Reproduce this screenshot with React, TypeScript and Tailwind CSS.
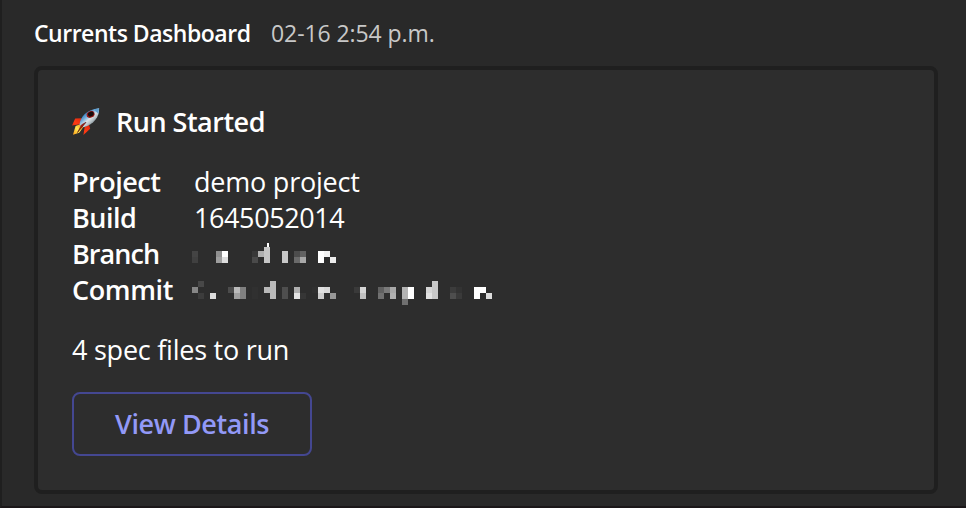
type Block = [x: number, y: number, height: number, shade: string];

const branch: Block[] = [
  [0, 8, 6, "#444"], [0, 14, 6, "#404040"],
  [24, 8, 6, "#8f8f8f"], [24, 14, 6, "#9e9e9e"], [30, 8, 6, "#fff"], [30, 14, 6, "#ddd"],
  [60, 8, 6, "#383838"], [60, 14, 6, "#4a4a4a"], [66, 8, 6, "#b0b0b0"], [72, 4, 16, "#c6c6c6"],
  [90, 8, 12, "#c8c8c8"],
  [102, 8, 6, "#4c4c4c"], [102, 14, 6, "#6a6a6a"], [108, 8, 6, "#626262"], [108, 14, 6, "#a8a8a8"],
  [126, 8, 12, "#fff"], [132, 8, 6, "#f2f2f2"], [138, 14, 6, "#ececec"],
];

const commit: Block[] = [
  [0, 8, 6, "#868686"], [6, 2, 6, "#484848"], [6, 14, 6, "#3c3c3c"], [18, 14, 6, "#ddd"],
  [36, 8, 6, "#4c4c4c"], [42, 8, 6, "#bbb"], [42, 14, 6, "#a0a0a0"], [48, 8, 12, "#808080"],
  [60, 8, 12, "#303030"], [72, 8, 6, "#b8b8b8"], [78, 2, 18, "#bbb"],
  [90, 8, 12, "#4e4e4e"], [102, 8, 6, "#b0b0b0"], [102, 14, 6, "#e4e4e4"], [108, 14, 6, "#363636"],
  [120, 8, 6, "#303030"], [126, 8, 6, "#e0e0e0"], [126, 14, 6, "#ccc"], [132, 8, 6, "#d8d8d8"], [138, 14, 6, "#989898"],
  [162, 8, 6, "#3a3a3a"], [168, 8, 6, "#d4d4d4"], [168, 14, 6, "#c0c0c0"],
  [186, 8, 6, "#606060"], [186, 14, 6, "#707070"], [192, 8, 6, "#7a7a7a"], [198, 8, 6, "#a8a8a8"], [198, 14, 6, "#b0b0b0"],
  [210, 8, 12, "#b4b4b4"], [210, 20, 6, "#707070"], [216, 8, 12, "#fff"],
  [234, 8, 6, "#d6d6d6"], [234, 14, 6, "#e2e2e2"], [240, 2, 18, "#c8c8c8"],
  [258, 8, 6, "#3c3c3c"], [258, 14, 6, "#4e4e4e"], [264, 8, 6, "#333"], [264, 14, 6, "#3a3a3a"],
  [282, 8, 12, "#fff"], [288, 8, 6, "#fff"], [294, 14, 6, "#ddd"],
];

function Redacted({ blocks, children }: { blocks: Block[]; children?: React.ReactNode }) {
  return (
    <svg className="h-9 w-[304px]" viewBox="0 -7 304 36" shapeRendering="crispEdges">
      {blocks.map(([x, y, height, shade]) => (
        <rect key={`${x}-${y}`} x={x} y={y} width={6} height={height} fill={shade} />
      ))}
      {children}
    </svg>
  );
}

function Rocket() {
  return (
    <svg className="h-7 w-7" viewBox="0 0 28 28">
      <defs>
        <linearGradient id="hull" x1="0.25" y1="0.25" x2="0.8" y2="0.85">
          <stop offset="0" stopColor="#2f78b8" />
          <stop offset="0.25" stopColor="#6ea9da" />
          <stop offset="0.5" stopColor="#dce3e6" />
          <stop offset="0.7" stopColor="#b4bfc4" />
          <stop offset="1" stopColor="#536068" />
        </linearGradient>
        <linearGradient id="fin" x1="1" y1="0" x2="0" y2="1">
          <stop offset="0" stopColor="#c91c0c" />
          <stop offset="0.55" stopColor="#ff3b13" />
          <stop offset="1" stopColor="#a20c05" />
        </linearGradient>
        <linearGradient id="flame" x1="1" y1="0" x2="0" y2="1">
          <stop offset="0" stopColor="#f58a12" />
          <stop offset="0.5" stopColor="#ffe852" />
          <stop offset="1" stopColor="#ff9b16" />
        </linearGradient>
      </defs>
      <path d="M10 10.2 3.2 10.6 0 17.6l8-1.3zM17 16.5l1.2 4.2-6.8 6.4 1.3-8z" fill="url(#fin)" />
      <path d="M7.5 16.5 3.6 18 1 26.7l6.2-1.9 4-5.5z" fill="url(#flame)" />
      <path d="M7.5 16.8C8 9 14.5 1.5 27.1.2c.4 8.2-5 16.2-15.5 19z" fill="url(#hull)" />
      <path d="M21.5 1.4 27.1.2l-.6 5.5z" fill="#5f9fd0" />
      <ellipse cx="18.6" cy="6.4" rx="4.1" ry="3.2" transform="rotate(-25 18.6 6.4)" fill="#991b18" />
      <ellipse cx="18.8" cy="6.1" rx="3" ry="2.3" transform="rotate(-25 18.8 6.1)" fill="#170b0c" />
      <path d="m14 14.3-8.5 10.2 4.2-7.8z" fill="#bb1308" stroke="#491311" strokeWidth=".6" />
    </svg>
  );
}

export default function App() {
  return (
    <main className="flex h-[508px] w-[966px] flex-col overflow-hidden border-b-2 border-l-2 border-b-[#1b1719] border-l-[#1f1f1f] bg-[#292929] pl-8 font-['Open_Sans','Noto_Sans',sans-serif] text-white">
      <header className="flex h-[66px] items-center gap-5 whitespace-nowrap text-[23px] leading-9">
        <h1 className="w-[217px] font-semibold tracking-[-0.48px]">Currents Dashboard</h1>
        <time className="text-[#c8c8c8] tracking-[-0.08px]">02-16 2:54 p.m.</time>
      </header>
      <section className="flex h-[428px] w-[904px] flex-col rounded-lg border-4 border-[#1f1f1f] bg-[#2d2d2d] pl-[34px] pt-[34px] text-[27px] leading-9 whitespace-nowrap">
        <h2 className="flex h-9 items-center gap-4 font-semibold tracking-[-0.5px]">
          <Rocket />
          Run Started
        </h2>
        <dl className="mt-6 grid grid-cols-[120px_1fr] auto-rows-[36px]">
          <dt className="font-semibold tracking-[-0.5px]">Project</dt>
          <dd className="pl-0.5 tracking-[-0.22px]">demo project</dd>
          <dt className="font-semibold tracking-[-0.5px]">Build</dt>
          <dd className="pl-0.5 tracking-[-0.4px]">1645052014</dd>
          <dt className="font-semibold tracking-[-0.95px]">Branch</dt>
          <dd><Redacted blocks={branch}><rect x="75" y="0" width="2" height="4" fill="#fff" /></Redacted></dd>
          <dt className="font-semibold tracking-[-0.4px]">Commit</dt>
          <dd><Redacted blocks={commit} /></dd>
        </dl>
        <p className="mt-6 tracking-[-0.24px]">4 spec files to run</p>
        <button className="mt-6 h-16 w-60 rounded-lg border-2 border-[#444791] font-semibold tracking-[-0.4px] text-[#9299f7]">View Details</button>
      </section>
    </main>
  );
}
